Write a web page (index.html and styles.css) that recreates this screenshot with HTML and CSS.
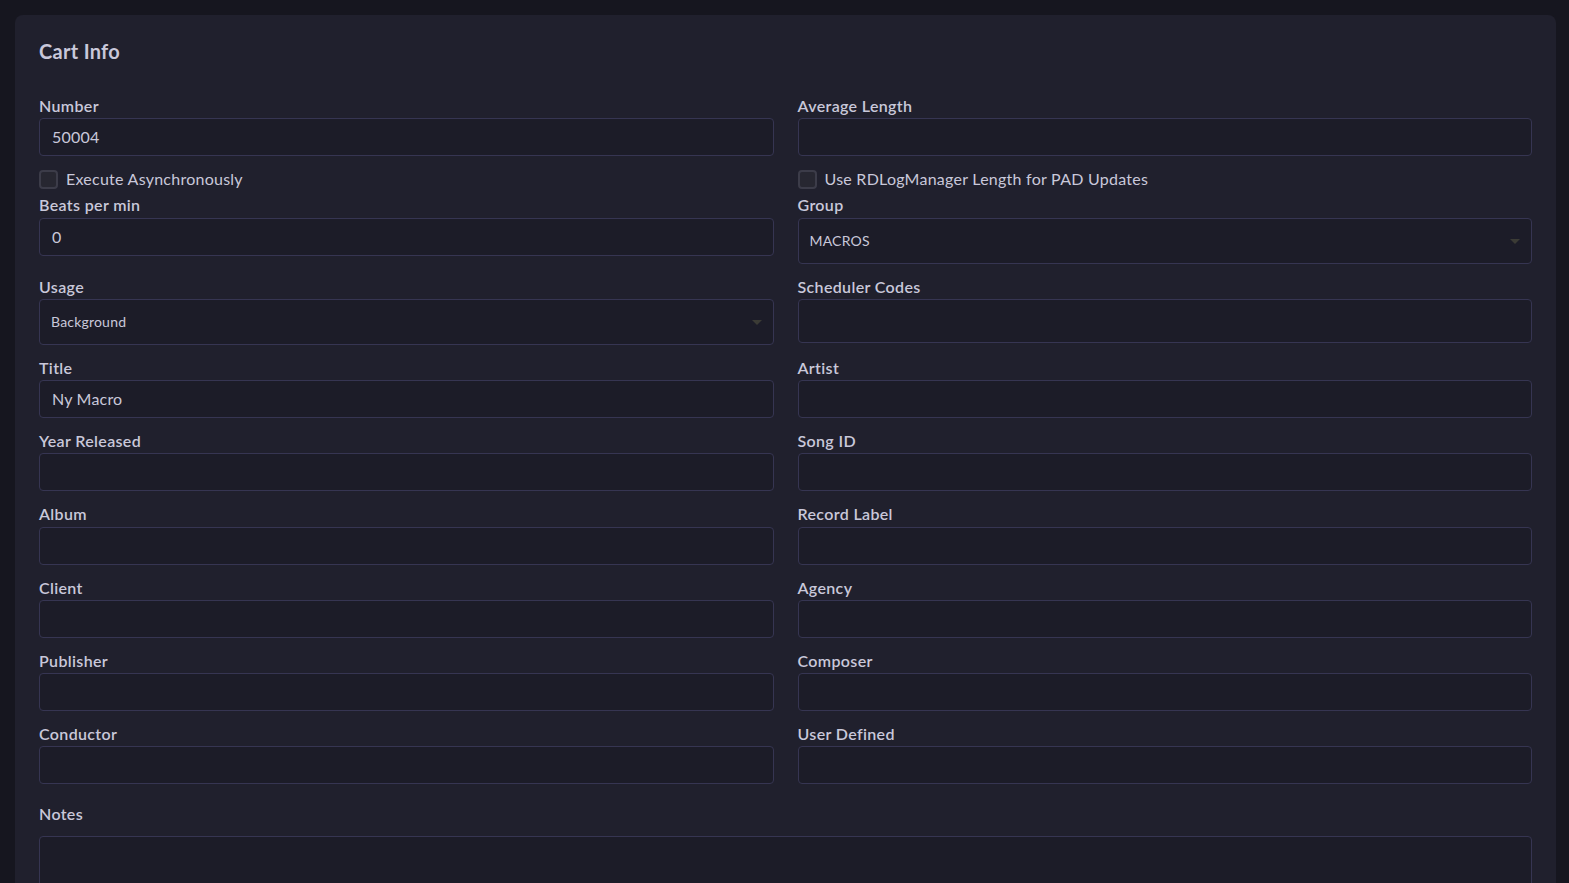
FILE: index.html
```html
<!DOCTYPE html>
<html>
<head>
<meta charset="utf-8">
<link rel="stylesheet" href="styles.css">
</head>
<body>
<div class="page">
  <section class="card">
    <h2 class="card-title">Cart Info</h2>
    <div class="grid">
      <div class="field">
        <label class="label">Number</label>
        <div class="input">50004</div>
      </div>
      <div class="field">
        <label class="label">Average Length</label>
        <div class="input"></div>
      </div>

      <div class="check-row"><span class="checkbox"></span><span class="check-text">Execute Asynchronously</span></div>
      <div class="check-row"><span class="checkbox"></span><span class="check-text">Use RDLogManager Length for PAD Updates</span></div>

      <div class="field">
        <label class="label">Beats per min</label>
        <div class="input">0</div>
      </div>
      <div class="field">
        <label class="label">Group</label>
        <div class="select">MACROS<span class="caret"></span></div>
      </div>

      <div class="field">
        <label class="label">Usage</label>
        <div class="select">Background<span class="caret"></span></div>
      </div>
      <div class="field">
        <label class="label">Scheduler Codes</label>
        <div class="input tall"></div>
      </div>

      <div class="field">
        <label class="label">Title</label>
        <div class="input">Ny Macro</div>
      </div>
      <div class="field">
        <label class="label">Artist</label>
        <div class="input"></div>
      </div>

      <div class="field">
        <label class="label">Year Released</label>
        <div class="input"></div>
      </div>
      <div class="field">
        <label class="label">Song ID</label>
        <div class="input"></div>
      </div>

      <div class="field">
        <label class="label">Album</label>
        <div class="input"></div>
      </div>
      <div class="field">
        <label class="label">Record Label</label>
        <div class="input"></div>
      </div>

      <div class="field">
        <label class="label">Client</label>
        <div class="input"></div>
      </div>
      <div class="field">
        <label class="label">Agency</label>
        <div class="input"></div>
      </div>

      <div class="field">
        <label class="label">Publisher</label>
        <div class="input"></div>
      </div>
      <div class="field">
        <label class="label">Composer</label>
        <div class="input"></div>
      </div>

      <div class="field">
        <label class="label">Conductor</label>
        <div class="input"></div>
      </div>
      <div class="field">
        <label class="label">User Defined</label>
        <div class="input"></div>
      </div>
    </div>
    <div class="notes">
      <label class="label notes-label">Notes</label>
      <div class="textarea"></div>
    </div>
  </section>
</div>
</body>
</html>
```

FILE: styles.css
```css
* { box-sizing: border-box; }
html, body {
  margin: 0;
  padding: 0;
  background: #16161f;
  height: 100%;
  overflow: hidden;
}
body {
  font-family: Lato, "Noto Sans", sans-serif;
  color: #c9c8da;
}
.page {
  padding: 15px 13px 0 15px;
}
.card {
  background: #20202d;
  border-radius: 8px;
  padding: 24px 24px 40px 24px;
  min-height: 1000px;
}
.card-title {
  margin: 0 0 32px 0;
  font-size: 20px;
  line-height: 24px;
  font-weight: 700;
  letter-spacing: 0.3px;
  color: #c9c8da;
}
.grid {
  display: grid;
  grid-template-columns: 1fr 1fr;
  column-gap: 24px;
  align-items: start;
}
.field {
  display: flex;
  flex-direction: column;
  margin-bottom: 12px;
}
.label {
  font-size: 16px;
  line-height: 22.25px;
  font-weight: 600;
  letter-spacing: 0.35px;
  color: #c9c8da;
  margin-bottom: 1px;
}
.input {
  height: 38px;
  border: 1px solid #363552;
  border-radius: 4px;
  background: #1c1c28;
  padding: 0 12px;
  font-size: 16px;
  line-height: 36px;
  letter-spacing: 0.2px;
  color: #c9c8da;
}
.input.tall { height: 44px; }
.select {
  position: relative;
  height: 46px;
  border: 1px solid #363552;
  border-radius: 4px;
  background: #1c1c28;
  padding: 0 11px;
  font-size: 14px;
  line-height: 44px;
  letter-spacing: 0.2px;
  color: #c9c8da;
}
.caret {
  position: absolute;
  right: 11px;
  top: 20px;
  width: 0;
  height: 0;
  border-left: 5px solid transparent;
  border-right: 5px solid transparent;
  border-top: 5px solid #3b3b35;
}
.check-row {
  display: flex;
  align-items: center;
  height: 20px;
  margin-top: 1px;
  margin-bottom: 5px;
}
.checkbox {
  width: 19px;
  height: 19px;
  border: 2px solid #3c3c49;
  border-radius: 4px;
  background: #272731;
  margin-right: 8px;
  flex: none;
}
.check-text {
  font-size: 16px;
  line-height: 20px;
  letter-spacing: 0.25px;
  color: #c9c8da;
}
.notes {
  display: flex;
  flex-direction: column;
  margin-top: 7px;
}
.notes-label {
  margin-bottom: 10px;
}
.textarea {
  height: 120px;
  border: 1px solid #363552;
  border-radius: 4px;
  background: #1c1c28;
}
```
